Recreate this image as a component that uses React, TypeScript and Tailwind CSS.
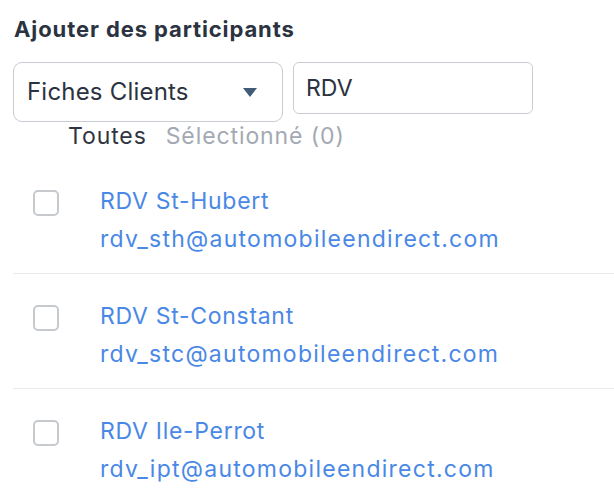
import React from "react";

const rows = [
  { name: "RDV St-Hubert", email: "rdv_sth@automobileendirect.com" },
  { name: "RDV St-Constant", email: "rdv_stc@automobileendirect.com" },
  { name: "RDV Ile-Perrot", email: "rdv_ipt@automobileendirect.com" },
];

export default function App() {
  return (
    <div
      className="w-[614px] h-[504px] bg-white overflow-hidden"
      style={{ fontFamily: "Inter, 'Noto Sans', sans-serif" }}
    >
      <div className="pl-[13px] pt-[15px]">
        <h1 className="text-[22px] leading-[28px] font-bold tracking-[0.9px] text-[#2b3240] pl-[1px]">
          Ajouter des participants
        </h1>
        <div className="flex items-start gap-[10px] mt-[19px]">
          <div className="w-[270px] h-[60px] border border-[#c9cdd3] rounded-[9px] flex items-center justify-between pl-[13px] pr-[25px]">
            <span className="text-[24px] tracking-[0.2px] text-[#2b3240]">Fiches Clients</span>
            <svg width="14" height="9" viewBox="0 0 14 9">
              <path d="M0 0 H14 L7 9 Z" fill="#3f5b77" />
            </svg>
          </div>
          <div className="w-[240px] h-[52px] border border-[#c9cdd3] rounded-[6px] flex items-center pl-[12px]">
            <span className="text-[23px] text-[#2b3240]">RDV</span>
          </div>
        </div>
        <div className="flex gap-[19px] pl-[55px] text-[23px] leading-[28px] tracking-[0.9px]">
          <span className="text-[#2f3542]">Toutes</span>
          <span className="text-[#a3a9b3]">Sélectionné (0)</span>
        </div>
        <div className="mt-[9px]">
          {rows.map((r, i) => (
            <div
              key={i}
              className={`flex items-start pl-[20px] h-[115px] ${i < rows.length - 1 ? "border-b border-[#ebebeb]" : ""}`}
            >
              <div className="mt-[31px] w-[26px] h-[26px] border-[2.5px] border-[#c6c9cd] rounded-[5px] shrink-0" />
              <div className="ml-[41px] mt-[23px] text-[23px] leading-[38px] text-[#4a88e6]">
                <div className="tracking-[0.7px]">{r.name}</div>
                <div className="tracking-[1.25px]">{r.email}</div>
              </div>
            </div>
          ))}
        </div>
      </div>
    </div>
  );
}
